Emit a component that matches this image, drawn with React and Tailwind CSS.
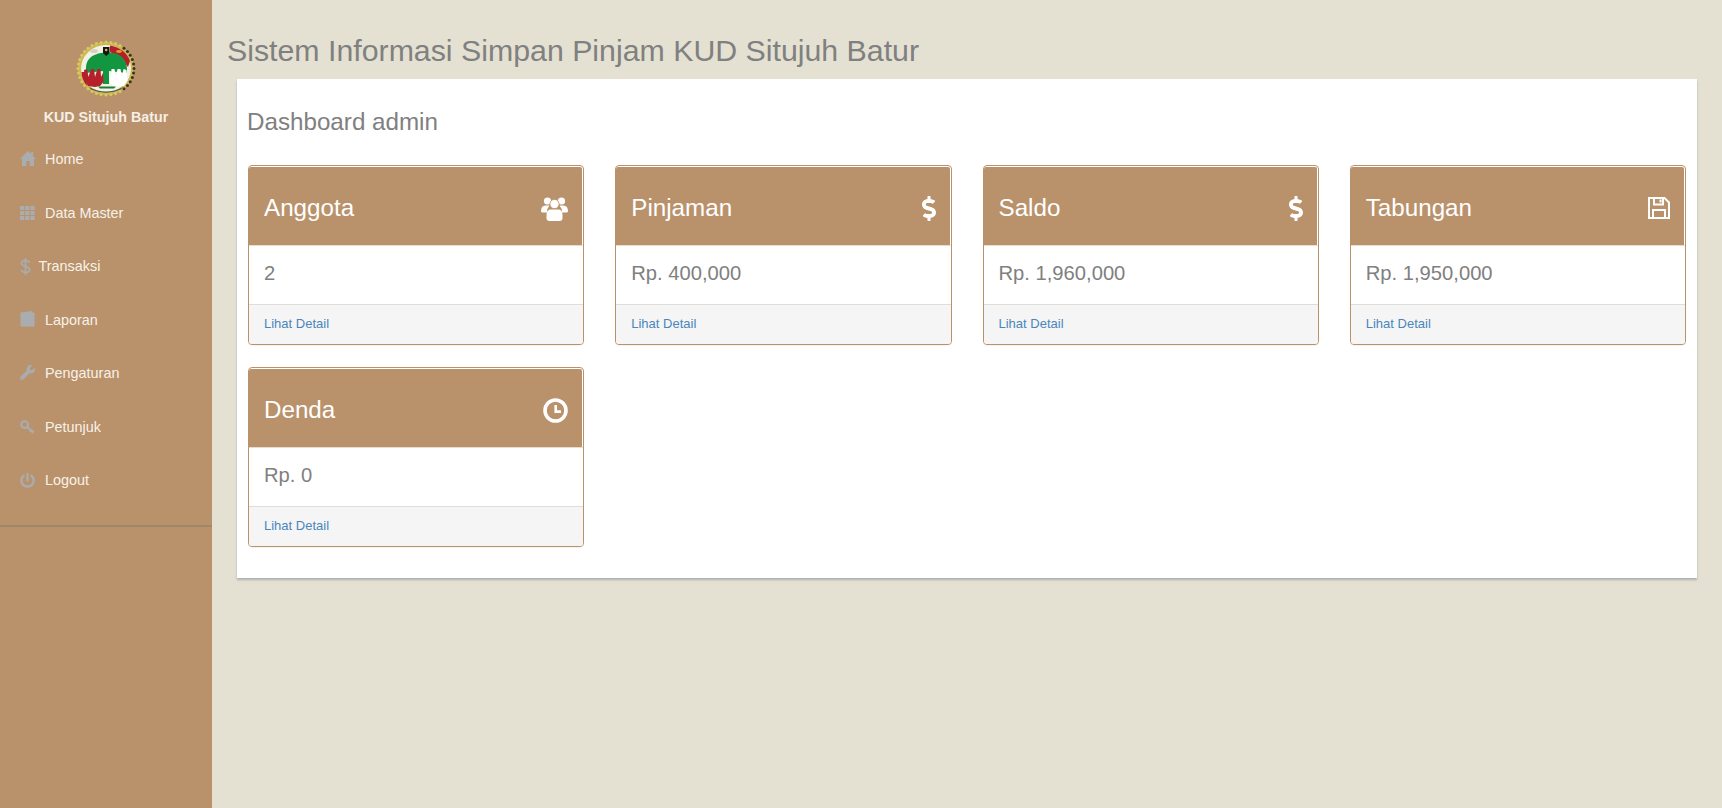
import React from "react";
import { FaWrench, FaPowerOff, FaDollarSign } from "react-icons/fa";

function Logo() {
  const dots = [];
  for (let i = 0; i < 36; i++) {
    const a = (i / 36) * Math.PI * 2;
    const right = Math.cos(a) > 0.55;
    dots.push(<circle key={i} cx={30 + 28 * Math.cos(a)} cy={28.5 + 26.5 * Math.sin(a)} r="1.5" fill={right ? "#3b3320" : "#d9c95c"} />);
  }
  return (
    <svg width="61" height="58" viewBox="0 0 61 58">
      <ellipse cx="30" cy="28.5" rx="28" ry="26.5" fill="#c9b955" />
      {dots}
      <ellipse cx="30" cy="28.5" rx="25" ry="23.5" fill="#f3f0e4" />
      <path d="M34 5.5 A25 23.5 0 0 1 54 21 L52 27 L44 17 L34 12 Z" fill="#b81d2a" />
      <path d="M5.5 32 L9 32 L11 46 A25 23.5 0 0 1 5.5 32 Z" fill="#b81d2a" />
      <path d="M10 28 C10 21 14 16 21 14 C26 12 36 12 41 14 C47 16 51 22 51 29 L51 33 L33 31 L33 44 L27 44 L27 31 L10 33 Z" fill="#12963f" />
      <path d="M8 30 L11 29 L12.5 37 L15 29 L18 29 L19 37 L21.5 29 L24.5 29 L25 37 L27 33 L27.5 42 L24 46 L19 47 L12 46 L9 41 Z" fill="#b5202b" />
      <path d="M33 33 L35 37 L35.5 29 L38.5 29 L40 37 L41.5 29 L44.5 29 L46 37 L47.5 29 L50.5 30 L51.5 41 L48 46 L38 47 L34 43 Z" fill="#ffffff" />
      <path d="M22 46.5 L40 46.5 L38 48.5 L24 48.5 Z" fill="#16803a" />
      <path d="M13 47 Q30 56 47 47 L45 49.5 Q30 56 15 49.5 Z" fill="#555" />
      <path d="M27 7 L33.5 7 L33.5 13 L30.2 16 L27 13 Z" fill="#151515" />
      <circle cx="30.2" cy="10" r="1.2" fill="#e8c93d" />
      <ellipse cx="43" cy="11.5" rx="3" ry="1.4" fill="#e0982f" />
      <ellipse cx="18" cy="11" rx="4" ry="2" fill="#d7d3c4" />
    </svg>
  );
}

const HomeIcon = () => (
  <svg width="16" height="15" viewBox="0 0 16 15" fill="currentColor" className="-mt-[3px]">
    <path d="M8 0 L11 3 V1 H13 V5 L16 8 H14 V15 H9.6 V10 H6.4 V15 H2 V8 H0 Z" />
  </svg>
);
const GridIcon = () => (
  <svg width="15" height="14" viewBox="0 0 15 14" fill="currentColor" className="-mt-[2px]">
    {[0, 5.2, 10.4].flatMap((x) => [0, 5, 10].map((y) => <rect key={`${x}-${y}`} x={x} y={y} width="4.2" height="4" />))}
  </svg>
);
const BookIcon = () => (
  <svg width="15" height="16" viewBox="0 0 15 16" fill="currentColor" className="-mt-[3px]">
    <path d="M1 1.5 L12 0 V1.5 H14.5 V15.5 H2 Q0.5 15.5 0.5 14 V2.5 Q0.5 1.6 1 1.5 Z" />
  </svg>
);
const DollarThin = () => (
  <svg width="11" height="17" viewBox="0 0 11 17" fill="none" stroke="currentColor" strokeWidth="1.7" className="-mt-[1px]">
    <path d="M9.6 4.6 C9 3 7.5 2.5 5.5 2.5 C3 2.5 1.6 3.6 1.6 5.2 C1.6 9 9.6 7.4 9.6 11.4 C9.6 13.2 8 14.3 5.5 14.3 C3.2 14.3 1.8 13.4 1.2 12 M5.5 0 V17" />
  </svg>
);
const KeyIcon = () => (
  <svg width="15" height="14" viewBox="0 0 15 14" className="-mt-[2px]">
    <circle cx="4.6" cy="4.6" r="3.4" fill="none" stroke="currentColor" strokeWidth="2" />
    <path d="M7 7 L13.5 12.2 M11 10.2 L9.7 11.8 M13 11.8 L12 13" fill="none" stroke="currentColor" strokeWidth="2.2" />
  </svg>
);
const UsersIcon = () => (
  <svg width="27" height="25" viewBox="0 0 27 25" fill="currentColor">
    <circle cx="6.5" cy="5" r="3.6" />
    <circle cx="20.5" cy="5" r="3.6" />
    <path d="M0 15.5 Q0 9.5 4.5 9.5 H8.5 Q6 12 6 16.5 H2 Q0 16.5 0 15.5 Z" />
    <path d="M27 15.5 Q27 9.5 22.5 9.5 H18.5 Q21 12 21 16.5 H25 Q27 16.5 27 15.5 Z" />
    <circle cx="13.5" cy="8" r="4.6" stroke="#b9926b" strokeWidth="0.8" />
    <path d="M5.5 22 V19 Q5.5 13.5 10 13.5 H17 Q21.5 13.5 21.5 19 V22 Q21.5 25 18.5 25 H8.5 Q5.5 25 5.5 22 Z" />
  </svg>
);
const SaveIcon = () => (
  <svg width="22" height="22" viewBox="0 0 22 22" fill="none" stroke="currentColor" strokeWidth="2">
    <path d="M1 1 H16.5 L21 5.5 V21 H1 Z" />
    <path d="M6 1 V7.5 H15 V1" />
    <path d="M11.5 2.5 H13.5 V5.5 H11.5 Z" fill="currentColor" strokeWidth="0" />
    <path d="M5 21 V13 H17 V21" />
  </svg>
);
const ClockIcon = () => (
  <svg width="25" height="25" viewBox="0 0 25 25" fill="none" stroke="currentColor">
    <circle cx="12.5" cy="12.5" r="10.5" strokeWidth="3.6" />
    <path d="M12.7 7 V13.6 H18" strokeWidth="2.6" />
  </svg>
);

const menu = [
  { icon: <HomeIcon />, label: "Home" },
  { icon: <GridIcon />, label: "Data Master" },
  { icon: <DollarThin />, label: "Transaksi", narrow: true },
  { icon: <BookIcon />, label: "Laporan" },
  { icon: <FaWrench className="w-[15px] h-[15px] -mt-[3px]" />, label: "Pengaturan" },
  { icon: <KeyIcon />, label: "Petunjuk" },
  { icon: <FaPowerOff className="w-[15px] h-[15px] -mt-[2px]" />, label: "Logout" },
];

const cards = [
  { title: "Anggota", value: "2", icon: <UsersIcon /> },
  { title: "Pinjaman", value: "Rp. 400,000", icon: <FaDollarSign className="w-[20px] h-[25px] -mr-[3px]" /> },
  { title: "Saldo", value: "Rp. 1,960,000", icon: <FaDollarSign className="w-[20px] h-[25px] -mr-[3px]" /> },
  { title: "Tabungan", value: "Rp. 1,950,000", icon: <SaveIcon /> },
  { title: "Denda", value: "Rp. 0", icon: <ClockIcon /> },
];

function Card({ title, value, icon }) {
  return (
    <div className="h-[180px] rounded-[4px] border border-[#b9926b] shadow-[0_1px_1px_rgba(0,0,0,0.05)] bg-white flex flex-col overflow-hidden">
      <div className="h-[78px] mt-[1px] mr-[1px] bg-[#b9926b] rounded-t-[2px] flex items-center justify-between pl-[15px] pr-[14px] text-white pt-[4px]">
        <span className="text-[24.2px] leading-[26px]">{title}</span>
        {icon}
      </div>
      <div className="h-[60px] pl-[15px] pb-[3px] flex items-center text-[20.2px] text-[#808080] border-b border-[#dddddd] border-t border-t-[#e9dccd]">
        {value}
      </div>
      <div className="flex-1 pl-[15px] pb-[1px] flex items-center bg-[#f5f5f5] text-[13px] text-[#4a86bc]">Lihat Detail</div>
    </div>
  );
}

export default function App() {
  return (
    <div className="flex min-h-[808px] bg-[#e4e1d2]" style={{ fontFamily: '"Liberation Sans", Arial, sans-serif' }}>
      <aside className="w-[212px] shrink-0 bg-[#b9926b] flex flex-col">
        <div className="pt-[40px] flex flex-col items-center">
          <Logo />
          <div className="mt-[9px] text-[14.3px] leading-[20px] font-bold text-[#f6efe6]">KUD Situjuh Batur</div>
        </div>
        <nav className="mt-[6.5px] pb-[16.5px] border-b-2 border-[#a08769]">
          {menu.map((m) => (
            <div key={m.label} className="h-[53.5px] flex items-center pl-[20px] text-[14.4px] text-[#f8f1e8]">
              <span className={`${m.narrow ? "w-[18.5px]" : "w-[25px]"} text-[#a9adb0] flex items-center`}>{m.icon}</span>
              {m.label}
            </div>
          ))}
        </nav>
      </aside>
      <main className="flex-1 min-w-0 pl-[15px] pt-[33px] pr-[25px]">
        <h1 className="text-[30.3px] leading-[36px] text-[#808080]">Sistem Informasi Simpan Pinjam KUD Situjuh Batur</h1>
        <section className="mt-[10px] ml-[10px] h-[499px] bg-white shadow-[0_2px_2px_rgba(120,130,140,0.5)] px-[11px] pt-[28px]">
          <h2 className="text-[24.2px] leading-[30px] text-[#808080] -ml-[1px]">Dashboard admin</h2>
          <div className="mt-[28px] grid grid-cols-4 gap-x-[31px] gap-y-[22px]">
            {cards.map((c) => <Card key={c.title} {...c} />)}
          </div>
        </section>
      </main>
    </div>
  );
}
